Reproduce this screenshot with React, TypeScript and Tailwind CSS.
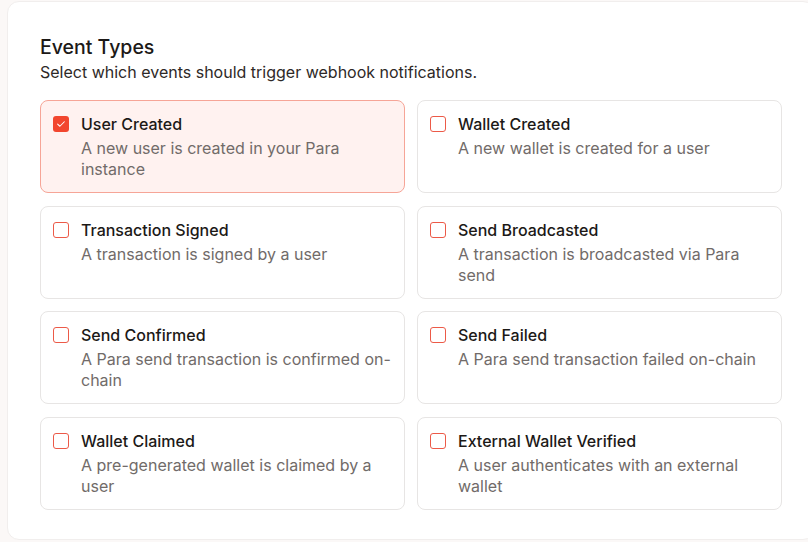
import React, { useState } from 'react';

// Event types for webhook notifications
const EVENTS = [
  { id: 'user_created', title: 'User Created', desc: 'A new user is created in your Para instance' },
  { id: 'wallet_created', title: 'Wallet Created', desc: 'A new wallet is created for a user' },
  { id: 'tx_signed', title: 'Transaction Signed', desc: 'A transaction is signed by a user' },
  { id: 'send_broadcasted', title: 'Send Broadcasted', desc: 'A transaction is broadcasted via Para send' },
  { id: 'send_confirmed', title: 'Send Confirmed', desc: 'A Para send transaction is confirmed on-chain' },
  { id: 'send_failed', title: 'Send Failed', desc: 'A Para send transaction failed on-chain' },
  { id: 'wallet_claimed', title: 'Wallet Claimed', desc: 'A pre-generated wallet is claimed by a user' },
  { id: 'external_verified', title: 'External Wallet Verified', desc: 'A user authenticates with an external wallet' },
];

const App: React.FC = () => {
  const [selected, setSelected] = useState<string[]>(['user_created']);

  const toggle = (id: string) => {
    setSelected((prev) => (prev.includes(id) ? prev.filter((x) => x !== id) : [...prev, id]));
  };

  return (
    <div className="h-[542px] overflow-hidden bg-[#fbf8f7] pl-[7px] pt-px font-['Inter',sans-serif]">
      <div className="w-[808px] h-[539px] bg-white rounded-xl border border-[#f1eeed] px-8 pt-[31px]">
        <h2 className="text-[19.5px] leading-7 font-medium text-[#1c1917]">Event Types</h2>
        <p className="text-[16px] leading-[22px] text-[#2e2927]">
          Select which events should trigger webhook notifications.
        </p>

        <div className="mt-[17px] grid grid-cols-2 gap-x-3 gap-y-[12.7px] w-[742px]">
          {EVENTS.map((ev) => {
            const isOn = selected.includes(ev.id);
            return (
              <button
                key={ev.id}
                onClick={() => toggle(ev.id)}
                className={`h-[93px] flex items-start gap-3 rounded-lg border px-3 pt-[11px] text-left ${
                  isOn ? 'bg-[#fff2f0] border-[#f6a597]' : 'bg-white border-[#e7e5e4]'
                }`}
              >
                <span
                  className={`mt-1 w-4 h-4 shrink-0 rounded-[3px] flex items-center justify-center ${
                    isOn ? 'bg-[#f2462e]' : 'border border-[#ec5a48] bg-white'
                  }`}
                >
                  {isOn && (
                    <svg viewBox="0 0 16 16" className="w-3 h-3" fill="none">
                      <path d="M3.5 8.2l3 2.8 6-6" stroke="white" strokeWidth="1.4" strokeLinecap="round" strokeLinejoin="round" />
                    </svg>
                  )}
                </span>
                <span className="flex flex-col">
                  <span className="text-[16px] leading-6 font-medium text-[#1c1917]">{ev.title}</span>
                  <span className="mt-0.5 text-[16px] leading-[21px] text-[#716b69]">{ev.desc}</span>
                </span>
              </button>
            );
          })}
        </div>
      </div>
    </div>
  );
};

export default App;
